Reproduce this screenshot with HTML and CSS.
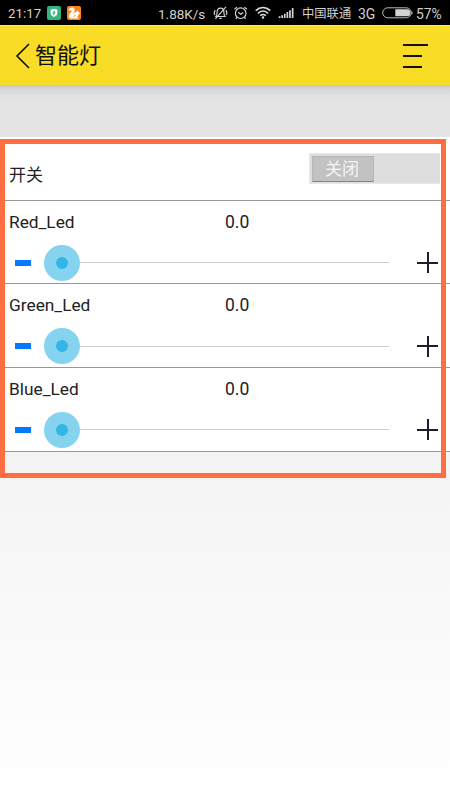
FILE: index.html
```html
<!DOCTYPE html>
<html lang="zh-CN">
<head>
<meta charset="utf-8">
<title>智能灯</title>
<link rel="stylesheet" href="styles.css">
</head>
<body>
<div class="status">
  <span class="time">21:17</span>
  <svg width="14" height="14" viewBox="0 0 14 14"><rect width="14" height="14" rx="2" fill="#35b27d"/><path d="M7 2.800l3.400 1v3.300c0 2-1.600 3.200-3.400 4-1.800-.8-3.400-2-3.400-4V3.800z" fill="#fff"/><path d="M7.500 4.800L5.700 7.200h1L6.400 9.100 8.300 6.600h-1z" fill="#35b27d" stroke="#35b27d" stroke-width=".6"/></svg>
  <svg width="14" height="14" viewBox="0 0 14 14"><rect width="14" height="14" rx="2" fill="#fa831d"/><path d="M1.800 3.600C2.600 1.700 5 1 6.600 2c1.700 1.100 1.600 3 .3 4.200C5.800 7.200 5 7.800 4.900 9c.9-1.600 2.300-2.700 4-2.700l1.700-1.900.5 1.400c1.200.4 1.800 1.200 1.700 2.200l-2 .5 1 1.200-1.500.3.400 1.400 1 1.100H4C2.300 12.400 1.500 11 1.800 9.500 2.200 7.900 3.500 7.100 4.300 6c.6-.9.300-1.600-.5-1.700-.8-.1-1.300.2-2 .8z" fill="#fff"/><path d="M6.600 11l1.300-1.800.8 1" fill="none" stroke="#fa831d" stroke-width=".7"/></svg>
  <span class="speed">1.88K/s</span>
  <svg width="15" height="14" viewBox="0 0 15 14" fill="none" stroke="#d2d2d2" stroke-width="1.200"><path d="M3 10.500h9c-1.100-1.200-1.100-2.300-1.100-4.200C10.900 3.600 9.500 2.200 7.500 2.200S4.100 3.600 4.100 6.300c0 1.900 0 3-1.100 4.200zM6.300 12.300h2.500M13 .8L2.400 12.800M2.300 4.200C1 5.800 1 7.600 2 9M12.800 4.200c1.300 1.600 1.300 3.400.3 4.800"/></svg>
  <svg width="14" height="14" viewBox="0 0 14 14" fill="none" stroke="#d2d2d2" stroke-width="1.200"><circle cx="6.700" cy="7.200" r="5.300"/><path d="M4.300 6.300l2.400 1.900 2.500-1.700M.5 3.300L3 1.100M10.400 1.100l2.500 2.200M3 11.300l-1.200 1.500M10.400 11.300l1.200 1.500"/></svg>
  <svg width="17" height="14" viewBox="0 0 17 14" fill="none" stroke="#dedede" stroke-width="1.600"><path d="M.7 4.700C5.200 .6 10.800 .6 15.300 4.700M2.900 7.300c3.200-2.900 7-2.900 10.200 0M5.200 9.700c1.800-1.500 3.800-1.500 5.600 0"/><circle cx="8" cy="11.500" r="1.200" fill="#dedede" stroke="none"/></svg>
  <svg width="16" height="14" viewBox="0 0 16 14" fill="#d2d2d2"><path d="M.7 10.300h1.700V12H.7zM3.300 9.300H5V12H3.300zM5.900 7.700h1.700V12H5.900zM8.500 6h1.700v6H8.500zM11.100 4.200h1.700V12h-1.700zM13.800 2h1.700v10h-1.700z"/></svg>
  <span class="carrier">中国联通</span>
  <span class="net">3G</span>
  <svg width="31" height="14" viewBox="0 0 31 14"><rect x=".7" y="1.800" width="28.600" height="10" rx="5" fill="none" stroke="#bbb" stroke-width="1"/><path d="M13.300 3.300H25a3.500 3.500 0 0 1 0 7H13.300z" fill="#d4d4d4"/><path d="M30 5.600v2.500" stroke="#bbb"/></svg>
  <span class="percent">57%</span>
</div>
<header class="header">
  <svg width="15" height="26" viewBox="0 0 15 26" fill="none" stroke="#111" stroke-width="1.600"><path d="M14 1L2 13l12 12"/></svg>
  <h1 class="title">智能灯</h1>
  <div class="menu"><i class="bar bar-long"></i><i class="bar"></i><i class="bar"></i></div>
</header>
<div class="spacer"></div>
<main class="panel">
  <section class="row-switch">
    <span class="label-switch">开关</span>
    <div class="switch"><span class="thumb">关闭</span></div>
  </section>
  <section class="row">
    <div class="caption"><span class="name">Red_Led</span><span class="value">0.0</span></div>
    <div class="control"><i class="minus"></i><div class="slider"><i class="knob"></i><i class="track"></i></div><i class="plus"></i></div>
  </section>
  <section class="row">
    <div class="caption"><span class="name">Green_Led</span><span class="value">0.0</span></div>
    <div class="control"><i class="minus"></i><div class="slider"><i class="knob"></i><i class="track"></i></div><i class="plus"></i></div>
  </section>
  <section class="row">
    <div class="caption"><span class="name">Blue_Led</span><span class="value">0.0</span></div>
    <div class="control"><i class="minus"></i><div class="slider"><i class="knob"></i><i class="track"></i></div><i class="plus"></i></div>
  </section>
  <div class="frame"></div>
</main>
<div class="rest"></div>
</body>
</html>
```

FILE: styles.css
```css
* { box-sizing: border-box; }
body {
  margin: 0;
  width: 450px;
  height: 800px;
  overflow: hidden;
  display: flex;
  flex-direction: column;
  background: #fff;
  color: #222;
  font-family: Roboto, "Noto Sans CJK SC", sans-serif;
}
svg { display: block; }
.status {
  height: 25px;
  padding: 1px 0 0 8px;
  display: grid;
  grid-template-columns: 39px 20px 91px 54.5px 21.500px 21px 23px 24px 56px 24px 34px 1fr;
  align-items: center;
  background: #000;
  color: #cfcfcf;
  font-size: 14px;
  line-height: 20px;
  white-space: nowrap;
}
.status span { position: relative; top: .5px; }
.time { font-size: 13.300px; }
.speed { font-size: 13.500px; }
.carrier { font-size: 12.300px; }
.net { font-size: 14px; }
.percent { font-size: 13.800px; }
.header {
  height: 60px;
  padding: 1px 22px 0 15px;
  display: flex;
  align-items: center;
  background: #f8dc26;
  border-top: 1px solid #fce95c;
}
.title {
  margin: 0 auto 0 5px;
  color: #111;
  font-size: 22px;
  line-height: 30px;
  font-weight: 400;
}
.menu {
  width: 25.500px;
  margin: 0 0 1px;
  display: grid;
  gap: 9px;
}
.bar { width: 19.500px; height: 2px; background: #111; }
.bar-long { width: 25.500px; }
.spacer {
  height: 52px;
  background: linear-gradient(#c9c9c9, #d8d8d8 5px, #e1e1e1 11px, #e5e5e5 17px);
}
.panel {
  position: relative;
  background: #fff;
}
.row-switch {
  height: 63.500px;
  padding: 16px 10px 0 9px;
  display: flex;
  justify-content: space-between;
  border-bottom: 1px solid #999;
}
.label-switch { font-size: 17px; line-height: 24px; margin-top: 10px; }
.switch {
  width: 131px;
  height: 31px;
  padding: 2px;
  background: #dedede;
  border: 1px solid #e8e8e8;
  border-right: 0;
}
.thumb {
  display: block;
  width: 62px;
  height: 26px;
  padding-right: 2px;
  background: #c2c2c2;
  border: 1px solid #b5b5b5;
  border-bottom-color: #858585;
  border-radius: 1px;
  color: #f5f5f5;
  font-size: 17px;
  line-height: 24px;
  text-align: center;
}
.row {
  height: 83.700px;
  padding: 11px 12px 0 9px;
  border-bottom: 1px solid #999;
}
.caption {
  display: grid;
  grid-template-columns: 216px 1fr;
  font-size: 17.300px;
  line-height: 20px;
}
.value { font-size: 17.500px; }
.control {
  height: 36px;
  margin-top: 13px;
  padding-left: 6px;
  display: flex;
  align-items: center;
}
.minus { width: 16px; height: 6px; background: #0679ff; }
.slider {
  flex: 1;
  margin: 0 28.500px 0 13px;
  display: flex;
  align-items: center;
}
.knob {
  width: 36px;
  height: 36px;
  border-radius: 50%;
  background: radial-gradient(circle, #33b5e5 5.500px, #86d3ef 6.200px);
}
.track { flex: 1; height: 1px; background: #ccc; }
.plus {
  width: 21px;
  height: 21px;
  background: linear-gradient(#1d1d2c, #1d1d2c) center / 21px 2px no-repeat, linear-gradient(#1d1d2c, #1d1d2c) center / 2px 21px no-repeat;
}
.frame {
  position: absolute;
  inset: 1.500px 4px -26.500px 0;
  border: 5.500px solid #ff6e40;
}
.rest {
  flex: 1;
  background: linear-gradient(#f3f3f3, #f5f5f5 10%, #fff);
}
```
